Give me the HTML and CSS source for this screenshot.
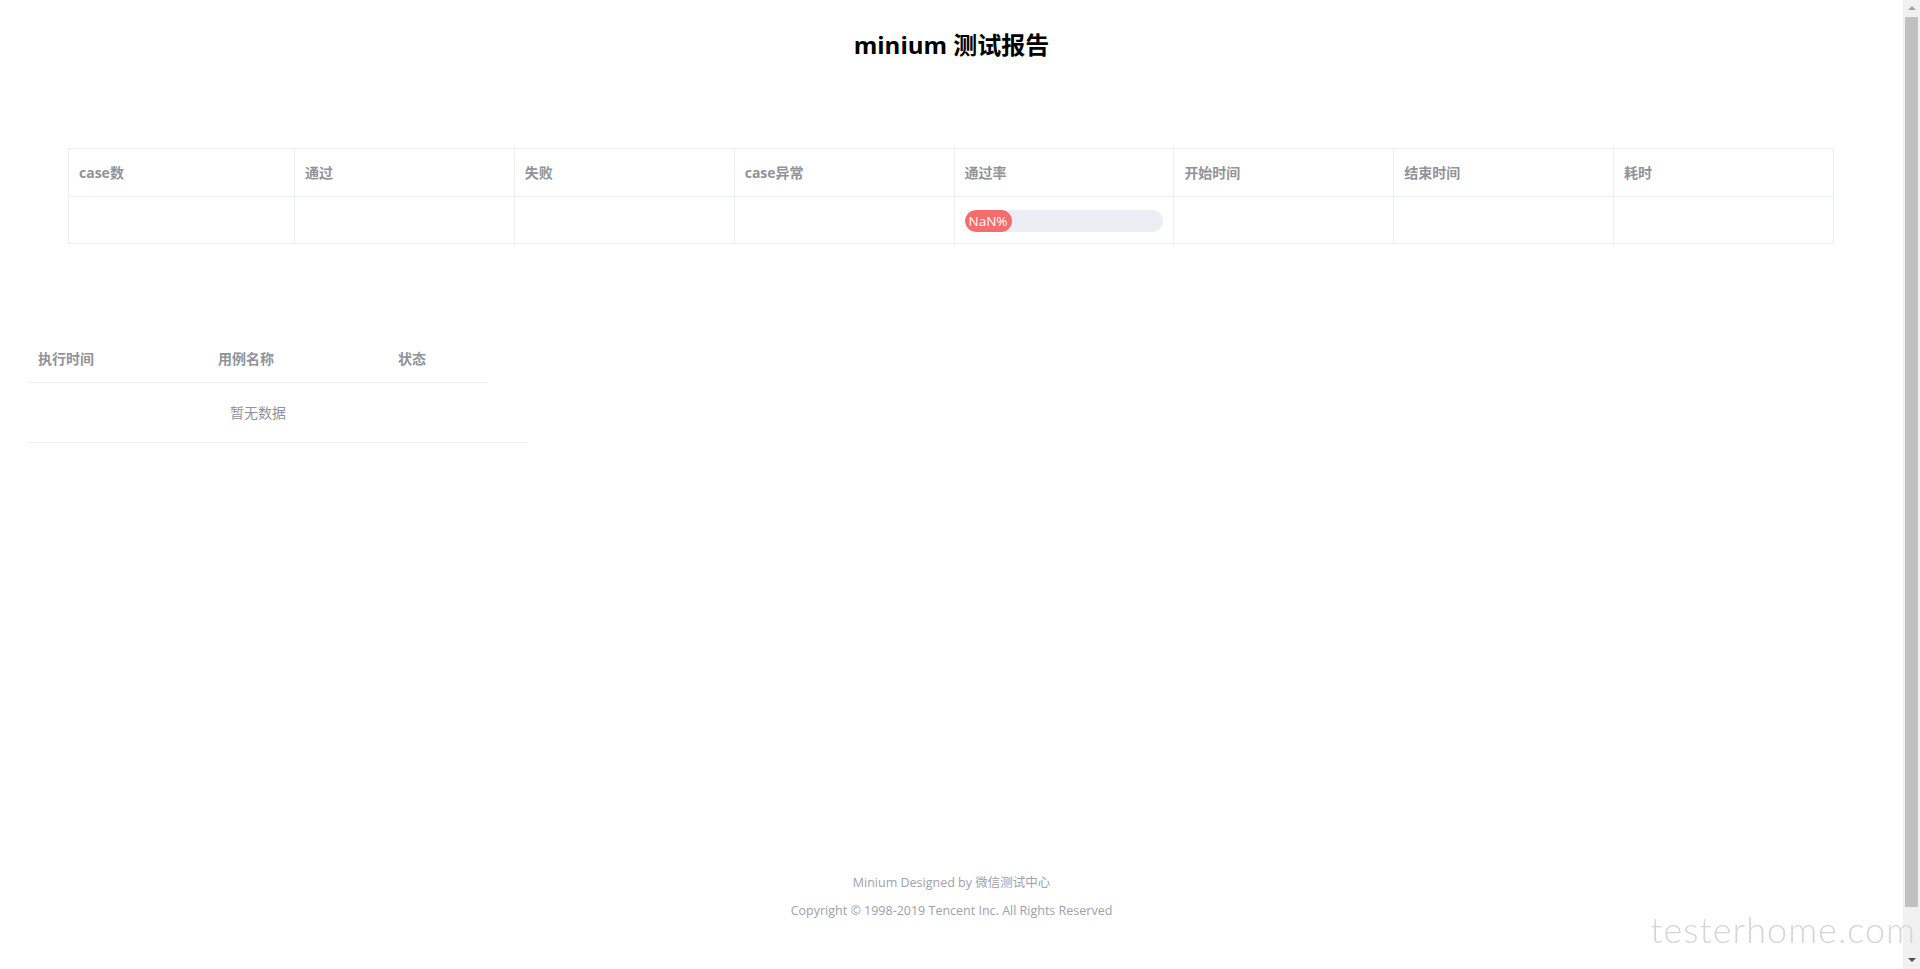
FILE: index.html
```
<!DOCTYPE html>
<html lang="zh-CN">
<head>
  <meta charset="UTF-8">
  <meta name="viewport" content="width=device-width, initial-scale=1.0">
  <title>minium 测试报告</title>
  <link rel="stylesheet" href="styles.css">
</head>
<body>
  <h2 class="title">minium 测试报告</h2>

  <div class="summary">
    <table class="summary-table">
      <thead>
        <tr>
          <th class="first-col">case数</th>
          <th>通过</th>
          <th>失败</th>
          <th>case异常</th>
          <th>通过率</th>
          <th>开始时间</th>
          <th>结束时间</th>
          <th>耗时</th>
        </tr>
      </thead>
      <tbody>
        <tr>
          <td></td>
          <td></td>
          <td></td>
          <td></td>
          <td>
            <div class="progress">
              <div class="progress-inner">NaN%</div>
            </div>
          </td>
          <td></td>
          <td></td>
          <td></td>
        </tr>
      </tbody>
    </table>
  </div>

  <div class="cases">
    <table class="cases-table">
      <thead>
        <tr>
          <th class="col-time">执行时间</th>
          <th class="col-name">用例名称</th>
          <th class="col-status">状态</th>
        </tr>
      </thead>
    </table>
    <div class="empty">暂无数据</div>
  </div>

  <div class="footer">
    <p>Minium Designed by 微信测试中心</p>
    <p>Copyright © 1998-2019 Tencent Inc. All Rights Reserved</p>
  </div>

  <!-- browser scrollbar as it shows in the screenshot -->
  <div class="scrollbar">
    <div class="scroll-arrow up"></div>
    <div class="scroll-thumb"></div>
    <div class="scroll-arrow down"></div>
  </div>

  <div class="watermark">testerhome.com</div>
</body>
</html>
```

FILE: styles.css
```
body {
  margin: 0 17px 0 0;
  font-family: "Open Sans", "Noto Sans CJK SC", sans-serif;
  font-size: 14px;
  color: #606266;
  background: #fff;
  overflow: hidden;
}

.title {
  margin: 0;
  padding-top: 30px;
  height: 30px;
  line-height: 30px;
  text-align: center;
  font-size: 24px;
  font-weight: bold;
  color: #000;
}

.summary {
  margin: 88px 69px 0 68px;
}

.summary-table {
  width: 100%;
  table-layout: fixed;
  border-collapse: collapse;
  border: 1px solid #EBEEF5;
}

.summary-table th,
.summary-table td {
  border: 1px solid #EBEEF5;
  padding: 12px 10px;
  height: 23px;
  line-height: 23px;
  text-align: left;
  box-sizing: content-box;
}

.summary-table td {
  padding: 12px 10px 11px;
}

.summary-table .first-col {
  width: 205px;
}

th {
  color: #909399;
  font-weight: bold;
  font-size: 14px;
}

.progress {
  height: 22px;
  width: 198px;
  border-radius: 11px;
  background: #EBEEF5;
  overflow: hidden;
}

.progress-inner {
  width: 47px;
  height: 22px;
  line-height: 22px;
  border-radius: 11px;
  background: #F56C6C;
  color: #fff;
  font-size: 13.5px;
  text-align: right;
  padding-right: 4px;
  box-sizing: border-box;
  white-space: nowrap;
}

.cases {
  width: 500px;
  margin: 91px 0 0 28px;
  border-bottom: 1px solid #EBEEF5;
}

.cases-table {
  width: 460px;
  table-layout: fixed;
  border-collapse: collapse;
}

.cases-table th {
  padding: 12px 10px;
  height: 23px;
  line-height: 23px;
  text-align: left;
  border-bottom: 1px solid #EBEEF5;
}

.col-time,
.col-name {
  width: 160px;
}

.empty {
  width: 460px;
  height: 59px;
  line-height: 59px;
  text-align: center;
  color: #909399;
}

.footer {
  margin-top: 426px;
  text-align: center;
  font-size: 12.5px;
  color: #a0a0a8;
}

.footer p {
  margin: 0;
  line-height: 28px;
}

.scrollbar {
  position: fixed;
  top: 0;
  right: 0;
  bottom: 0;
  width: 17px;
  background: #f1f1f1;
  display: flex;
  flex-direction: column;
  align-items: center;
}

.scroll-arrow {
  width: 0;
  height: 0;
  border-left: 4px solid transparent;
  border-right: 4px solid transparent;
}

.scroll-arrow.up {
  margin-top: 6px;
  border-bottom: 4px solid #a3a3a3;
}

.scroll-arrow.down {
  margin-top: auto;
  margin-bottom: 7px;
  border-top: 4px solid #505050;
}

.scroll-thumb {
  margin-top: 7px;
  width: 13px;
  height: 890px;
  background: #c1c1c1;
}

.watermark {
  position: fixed;
  right: 4px;
  bottom: 18px;
  font-family: Lato, "DejaVu Sans", sans-serif;
  font-weight: 300;
  font-size: 36px;
  letter-spacing: 1px;
  color: #d6d6d6;
  white-space: nowrap;
  pointer-events: none;
}
```
